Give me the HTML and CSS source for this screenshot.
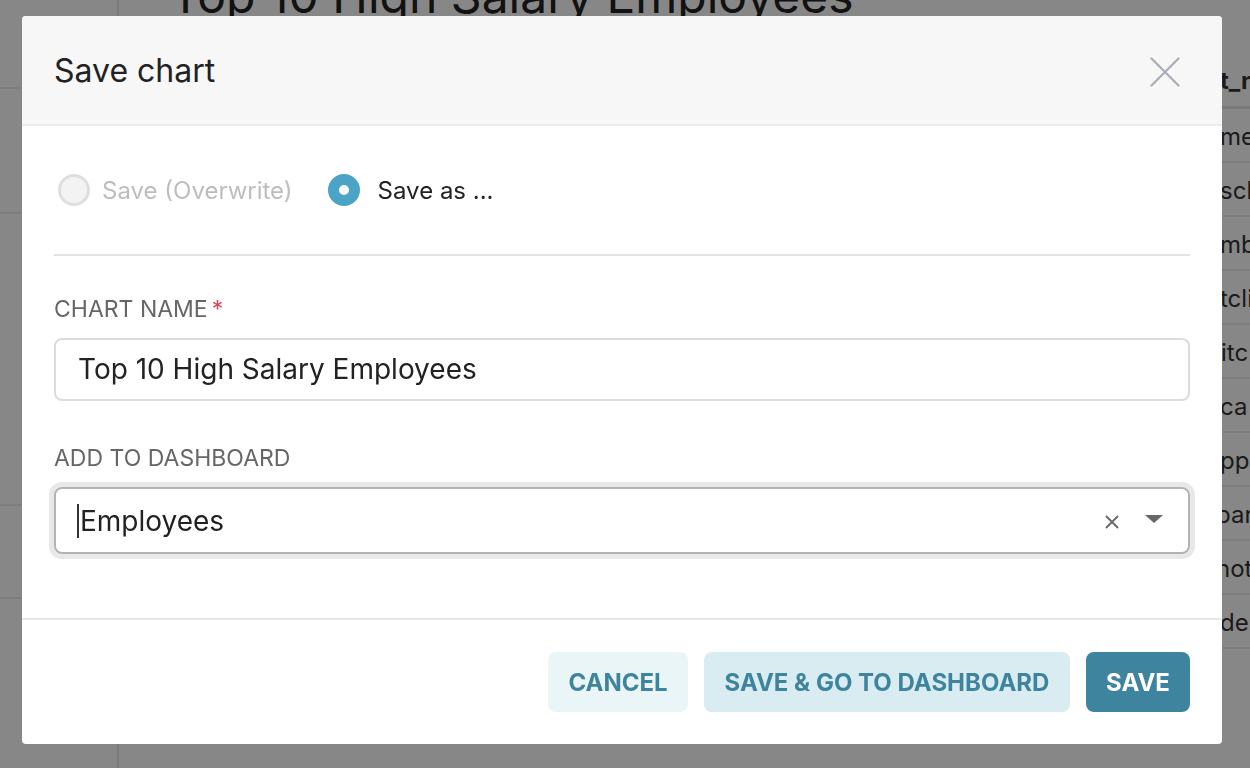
FILE: index.html
```html
<!DOCTYPE html>
<html>
<head>
<meta charset="utf-8">
<link rel="stylesheet" href="styles.css">
</head>
<body>
<div class="page">
  <aside class="side">
    <div class="side-block b1"></div>
    <div class="side-block b2"></div>
    <div class="side-block b3"></div>
    <div class="side-block b4"></div>
  </aside>
  <main class="main">
    <h1 class="chart-title">Top 10 High Salary Employees</h1>
    <div class="table">
      <div class="th">t_n</div>
      <div class="td">me</div>
      <div class="td">sch</div>
      <div class="td">mb</div>
      <div class="td">tcli</div>
      <div class="td cut-s">itc</div>
      <div class="td">ca</div>
      <div class="td">pp</div>
      <div class="td cut">par</div>
      <div class="td cut">hot</div>
      <div class="td">de</div>
    </div>
  </main>
</div>

<div class="mask"></div>

<div class="modal">
  <div class="modal-header">
    <h2 class="modal-title">Save chart</h2>
    <button class="close" aria-label="Close">
      <svg width="30" height="30" viewBox="0 0 30 30"><path d="M1.5 1.5 L28.5 28.5 M28.5 1.5 L1.5 28.5" stroke="#abadb6" stroke-width="2.2" fill="none" stroke-linecap="round"/></svg>
    </button>
  </div>
  <div class="modal-body">
    <div class="radios">
      <label class="radio disabled"><span class="dot"></span><span>Save (Overwrite)</span></label>
      <label class="radio checked"><span class="dot"></span><span>Save as ...</span></label>
    </div>
    <hr class="divider">
    <div class="field">
      <div class="label">CHART NAME<span class="req">*</span></div>
      <div class="input">Top 10 High Salary Employees</div>
    </div>
    <div class="field">
      <div class="label">ADD TO DASHBOARD</div>
      <div class="select">
        <span class="caret"></span><span class="value">Employees</span>
        <span class="clear">
          <svg width="16" height="16" viewBox="0 0 16 16"><path d="M2 2 L14 14 M14 2 L2 14" stroke="#666" stroke-width="1.8" fill="none"/></svg>
        </span>
        <span class="arrow">
          <svg width="20" height="10" viewBox="0 0 20 10"><path d="M1 1 H19 L10 9 Z" fill="#666"/></svg>
        </span>
      </div>
    </div>
  </div>
  <div class="modal-footer">
    <button class="btn btn-light">CANCEL</button>
    <button class="btn btn-mid">SAVE &amp; GO TO DASHBOARD</button>
    <button class="btn btn-primary">SAVE</button>
  </div>
</div>
</body>
</html>
```

FILE: styles.css
```css
* { box-sizing: border-box; }
html, body { margin: 0; padding: 0; height: 100%; overflow: hidden; }
body {
  font-family: Inter, "Noto Sans", "Liberation Sans", sans-serif;
  background: #fff;
  color: #333;
  width: 1250px;
  height: 768px;
}

/* background page */
.page {
  display: flex;
  height: 768px;
  overflow: hidden;
}
.side {
  width: 119px;
  flex-shrink: 0;
  border-right: 2px solid #e8e8e8;
  display: flex;
  flex-direction: column;
}
.side-block { border-bottom: 2px solid #ececec; }
.side-block.b1 { height: 89px; }
.side-block.b2 { height: 125px; }
.side-block.b3 { height: 292px; }
.side-block.b4 { height: 93px; }

.main {
  flex: 1;
  min-width: 0;
}
.chart-title {
  margin: -32px 0 0 51px;
  font-size: 48px;
  font-weight: 400;
  color: #222;
  line-height: 56px;
  white-space: nowrap;
}
.table {
  margin: 0 0 0 1101px;
  width: 40px;
  overflow: hidden;
  font-size: 24px;
  color: #333;
}
.th {
  margin-top: 32px;
  height: 53px;
  font-weight: 700;
  line-height: 50px;
  border-bottom: 3px solid #e4e4e4;
  white-space: nowrap;
}
.td {
  height: 54px;
  line-height: 56px;
  border-bottom: 2px solid #ececec;
  white-space: nowrap;
}
.td.cut { text-indent: -4px; }
.td.cut-s { text-indent: 1px; }

.mask {
  position: fixed;
  inset: 0;
  background: rgba(0, 0, 0, 0.47);
}

/* modal */
.modal {
  position: fixed;
  left: 22px;
  top: 16px;
  width: 1200px;
  height: 728px;
  background: #fff;
  border-radius: 4px;
  display: flex;
  flex-direction: column;
  overflow: hidden;
}
.modal-header {
  height: 110px;
  background: #f7f7f7;
  border-bottom: 2px solid #ececec;
  display: flex;
  align-items: center;
  justify-content: space-between;
  padding: 0 42px 0 32px;
  flex-shrink: 0;
}
.modal-title {
  margin: 0;
  font-size: 32px;
  font-weight: 400;
  color: #222;
}
.close {
  border: 0;
  background: none;
  padding: 0;
  width: 30px;
  height: 30px;
  display: flex;
  margin-top: 4px;
}

.modal-body {
  flex: 1;
  padding: 48px 32px 0 32px;
}
.radios {
  display: flex;
  gap: 35px;
  align-items: center;
  height: 32px;
  padding-left: 4px;
}
.radio {
  display: flex;
  align-items: center;
  gap: 18px;
  font-size: 24px;
  color: #222;
}
.radio .dot {
  width: 32px;
  height: 32px;
  border-radius: 50%;
  flex-shrink: 0;
}
.radio.disabled { color: #bdbdbd; gap: 12px; }
.radio.disabled .dot {
  background: #f3f3f3;
  border: 3px solid #dedede;
}
.radio.checked .dot {
  border: 11px solid #4ba4c6;
  background: #fff;
}

.divider {
  margin: 48px 0 0 0;
  border: 0;
  border-top: 2px solid #e3e3e3;
}

.field { margin-top: 38px; }
.field + .field { margin-top: 42px; }
.label {
  font-size: 23px;
  color: #666;
  line-height: 30px;
  margin-bottom: 14px;
}
.req { color: #e04355; margin-left: 4px; }
.input {
  height: 63px;
  border: 2px solid #d9dce1;
  border-radius: 8px;
  padding: 0 22px;
  font-size: 28px;
  line-height: 59px;
  color: #222;
}
.select {
  height: 67px;
  border: 2px solid #b3b3b3;
  border-radius: 8px;
  box-shadow: 0 0 0 5px #e8e8e8;
  display: flex;
  align-items: center;
  padding: 0 24px 0 21px;
  font-size: 28px;
  color: #222;
}
.caret {
  width: 2px;
  height: 34px;
  background: #333;
  margin-right: 1px;
}
.value { flex: 1; }
.clear { display: flex; margin-right: 24px; margin-top: 2px; }
.arrow { display: flex; margin-top: -4px; }

.modal-footer {
  border-top: 2px solid #e8e8e8;
  padding: 32px 32px;
  display: flex;
  justify-content: flex-end;
  gap: 16px;
  flex-shrink: 0;
}
.btn {
  height: 60px;
  border: 0;
  border-radius: 8px;
  font-family: Inter, "Noto Sans", "Liberation Sans", sans-serif;
  font-weight: 700;
  font-size: 24px;
  padding: 0 10px;
  color: #3f849e;
}
.btn-light { background: #eaf5f8; width: 140px; }
.btn-mid { background: #d9ecf2; width: 366px; }
.btn-primary { background: #3f849e; color: #fff; width: 104px; }
```
